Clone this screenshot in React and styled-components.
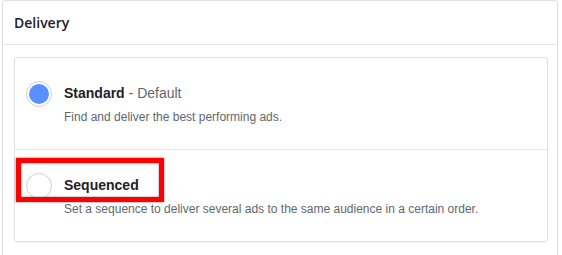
import React from "react";
import styled, { createGlobalStyle } from "styled-components";

const GlobalStyle = createGlobalStyle`
  body {
    margin: 0;
    background: #fff;
    font-family: "Liberation Sans", Arial, sans-serif;
  }
`;

const options = [
  {
    id: "standard",
    title: "Standard",
    note: "Default",
    description: "Find and deliver the best performing ads.",
    checked: true,
  },
  {
    id: "sequenced",
    title: "Sequenced",
    description: "Set a sequence to deliver several ads to the same audience in a certain order.",
    checked: false,
    highlighted: true,
  },
];

const App = () => {
  return (
    <>
      <GlobalStyle />
      <Panel>
        <Header>Delivery</Header>
        <Body>
          <Card>
            {options.map((option) => (
              <Option key={option.id}>
                <Radio $checked={option.checked} />
                <Text>
                  <Title>
                    {option.title}
                    {option.note && <Note> - {option.note}</Note>}
                  </Title>
                  <Description>{option.description}</Description>
                </Text>
                {option.highlighted && <Highlight />}
              </Option>
            ))}
          </Card>
        </Body>
      </Panel>
    </>
  );
};

export default App;

const Panel = styled.div`
  margin-left: 2px;
  width: 554px;
  height: 280px;
  border: 1px solid #dddfe2;
  border-radius: 3px;
  background: #fff;
`;

const Header = styled.div`
  height: 42px;
  display: flex;
  align-items: center;
  padding: 0 11px 1px;
  border-bottom: 1px solid #e5e6e9;
  font-family: "Open Sans", "Liberation Sans", sans-serif;
  font-size: 14px;
  font-weight: 600;
  color: #1d2129;
`;

const Body = styled.div`
  padding: 12px 9px 12px 11px;
`;

const Card = styled.div`
  border: 1px solid #dddfe2;
  border-radius: 3px;
  box-shadow: 0 1px 1px rgba(0, 0, 0, 0.04);
`;

const Option = styled.div`
  position: relative;
  display: flex;
  align-items: flex-start;
  gap: 12px;
  padding: 23px 12px 24px 11px;

  & + & {
    border-top: 1px solid #e5e6e9;
  }
`;

const Radio = styled.span`
  flex: none;
  box-sizing: border-box;
  width: 26px;
  height: 26px;
  border-radius: 50%;
  border: 1px solid #ccd0d5;
  background: #fff;
  display: flex;
  align-items: center;
  justify-content: center;

  &::after {
    content: "";
    width: 20px;
    height: 20px;
    border-radius: 50%;
    background: ${(props) => (props.$checked ? "#5890ff" : "transparent")};
  }
`;

const Text = styled.div`
  padding-top: 4px;
  display: flex;
  flex-direction: column;
  gap: 8px;
`;

const Title = styled.div`
  font-size: 14px;
  line-height: 16px;
  font-weight: 700;
  color: #1d2129;
`;

const Note = styled.span`
  font-weight: 400;
  color: #606770;
`;

const Description = styled.div`
  font-size: 12px;
  line-height: 16px;
  color: #606770;
`;

const Highlight = styled.div`
  position: absolute;
  left: 1px;
  top: 8px;
  width: 148px;
  height: 44px;
  box-sizing: border-box;
  border: 5px solid #ff0000;
  box-shadow: 0 0 2px rgba(0, 0, 0, 0.6), inset 0 0 2px rgba(0, 0, 0, 0.6);
`;
